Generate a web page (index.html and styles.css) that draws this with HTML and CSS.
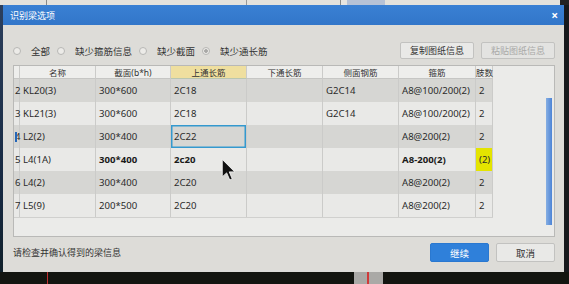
FILE: index.html
```html
<!DOCTYPE html>
<html lang="zh">
<head>
<meta charset="utf-8">
<title>识别梁选项</title>
<link rel="stylesheet" href="styles.css">
</head>
<body>
<div class="screen">
  <div class="top"></div>
  <div class="left"></div>
  <div class="dialog">
    <div class="titlebar"><span class="title">识别梁选项</span><span class="close">×</span></div>
    <div class="body">
      <div class="toolbar">
        <label class="radio"><span class="dot"></span>全部</label>
        <label class="radio"><span class="dot"></span>缺少箍筋信息</label>
        <label class="radio"><span class="dot"></span>缺少截面</label>
        <label class="radio"><span class="dot on"></span>缺少通长筋</label>
        <div class="tbtns">
          <button class="btn">复制图纸信息</button>
          <button class="btn disabled">粘贴图纸信息</button>
        </div>
      </div>
      <div class="frame">
        <div class="grid">
          <div class="tr head">
            <div class="rn"></div>
            <div>名称</div>
            <div>截面(b*h)</div>
            <div class="hl">上通长筋</div>
            <div>下通长筋</div>
            <div>侧面钢筋</div>
            <div>箍筋</div>
            <div class="last">肢数</div>
          </div>
          <div class="tr alt">
            <div class="rn">2</div><div>KL20(3)</div><div>300*600</div><div>2C18</div><div></div><div>G2C14</div><div>A8@100/200(2)</div><div>2</div>
          </div>
          <div class="tr">
            <div class="rn">3</div><div>KL21(3)</div><div>300*600</div><div>2C18</div><div></div><div>G2C14</div><div>A8@100/200(2)</div><div>2</div>
          </div>
          <div class="tr alt">
            <div class="rn"><span class="mark"></span>4</div><div>L2(2)</div><div>300*400</div><div class="sel">2C22</div><div></div><div></div><div>A8@200(2)</div><div>2</div>
          </div>
          <div class="tr">
            <div class="rn">5</div><div>L4(1A)</div><div class="b">300*400</div><div class="b">2c20</div><div></div><div></div><div class="b">A8-200(2)</div><div class="yel">(2)</div>
          </div>
          <div class="tr alt">
            <div class="rn">6</div><div>L4(2)</div><div>300*400</div><div>2C20</div><div></div><div></div><div>A8@200(2)</div><div>2</div>
          </div>
          <div class="tr end">
            <div class="rn">7</div><div>L5(9)</div><div>200*500</div><div>2C20</div><div></div><div></div><div>A8@200(2)</div><div>2</div>
          </div>
        </div>
        <div class="vscroll"></div>
      </div>
      <div class="footer">
        <span class="status">请检查并确认得到的梁信息</span>
        <button class="btn big primary">继续</button>
        <button class="btn big">取消</button>
      </div>
    </div>
  </div>
  <div class="right"></div>
  <div class="bottom"></div>
  <svg class="cursor" viewBox="0 0 12 19" width="15" height="24" aria-hidden="true">
    <path d="M1 1 L1 15 L4.5 11.8 L7 17.5 L9 16.6 L6.6 11 L11 11 Z" fill="#111" stroke="#f4f4f4" stroke-width="0.7" stroke-linejoin="round"/>
  </svg>
</div>
</body>
</html>
```
FILE: styles.css
```css
body {
  margin: 0;
  background: #111;
}
.screen {
  width: 569px;
  height: 284px;
  display: grid;
  grid-template-columns: 3px 561px 5px;
  grid-template-rows: 5px 267px 12px;
  position: relative;
  overflow: hidden;
  font-family: "Noto Sans", "Noto Sans CJK SC", sans-serif;
}
.top {
  grid-column: 1 / -1;
  background: linear-gradient(to right, #e4e2dc 0 46px, #8a8a88 46px 47px, #e4e2dc 47px 246px, #9a9a98 246px 247px, #e4e2dc 247px 340px, #8a8a88 340px 341px, #e8e6e0 341px 347px, #b6c2d6 347px 385px, #e4e2dc 385px 560px, #222 560px);
}
.left {
  background: linear-gradient(#2c3f5c, #162840 70%, #10202a);
}
.right {
  background: #17191c;
}
.bottom {
  grid-column: 1 / -1;
  background: linear-gradient(to right, #131510 0 47px, #c03030 47px 48px, #131510 48px 354px, #aaa9a6 354px 367px, #d03a3a 367px 369px, #aaa9a6 369px 383px, #131510 383px);
}
.dialog {
  background: #dddcd8;
  display: flex;
  flex-direction: column;
}
.titlebar {
  height: 20px;
  flex: none;
  background: linear-gradient(#3a80d3, #3276c9);
  display: flex;
  align-items: center;
  padding: 0 6px 0 7px;
  color: #fff;
}
.title {
  font-size: 9px;
}
.close {
  margin-left: auto;
  font-size: 12px;
  font-weight: bold;
}
.body {
  flex: 1;
  display: flex;
  flex-direction: column;
  padding: 17px 9px 10px 10px;
}
.toolbar {
  height: 17px;
  display: flex;
  align-items: center;
}
.radio {
  display: flex;
  align-items: center;
  font-size: 9.5px;
  color: #333;
  margin-right: 7px;
}
.dot {
  width: 8px;
  height: 8px;
  box-sizing: border-box;
  border: 1px solid #b7b7b5;
  border-radius: 50%;
  background: #ecebe8;
  margin-right: 10px;
}
.dot.on {
  background: radial-gradient(circle, #a8a8a6 0 1.5px, #ecebe8 2.2px);
}
.tbtns {
  margin-left: auto;
  display: flex;
  gap: 7px;
}
.btn {
  font-family: inherit;
  width: 74px;
  height: 17px;
  font-size: 9px;
  border: 1px solid #c2c2c0;
  background: #e9e9e7;
  border-radius: 2px;
  color: #333;
  padding: 0;
}
.btn.disabled {
  color: #a9a9a7;
  background: #e3e3e1;
}
.frame {
  margin-top: 6px;
  height: 172px;
  box-sizing: border-box;
  border: 1px solid #b9b9b7;
  background: #ebebe9;
  display: flex;
}
.grid {
  width: 479px;
  align-self: flex-start;
}
.tr {
  display: grid;
  grid-template-columns: 6px 76px 75px 76px 76px 76px 77px 17px;
  height: 23px;
  background: #e9e9e7;
}
.tr.alt {
  background: #d6d6d3;
}
.tr > div {
  border-right: 1px solid #cbcbc9;
  box-sizing: border-box;
  font-size: 9.6px;
  color: #2b2b2b;
  padding-left: 3px;
  display: flex;
  align-items: center;
  white-space: nowrap;
}
.tr > .rn {
  padding-left: 1px;
  overflow: visible;
  position: relative;
}
.mark {
  position: absolute;
  left: 1px;
  top: 7px;
  width: 2px;
  height: 10px;
  background: #2466b8;
}
.tr.head {
  height: 13px;
}
.tr.head > div {
  background: #eeeeec;
  font-size: 8.5px;
  justify-content: center;
  padding: 0;
  border-bottom: 1px solid #c6c6c4;
  color: #333;
}
.tr.head > .hl {
  background: #efdf9f;
  border-bottom-color: #b9c6b0;
}
.tr.head > .last {
  justify-content: flex-start;
}
.tr.end {
  border-bottom: 1px solid #d0d0ce;
}
.tr > .b {
  font-weight: bold;
  color: #1a1a1a;
}
.tr > .yel {
  background: #e4e400;
}
.tr > .sel {
  box-shadow: inset 0 0 0 1.5px #3499cf;
}
.vscroll {
  margin: 32px 2px 11px auto;
  width: 6px;
  background: linear-gradient(to right, #86aee2, #4d84d6);
}
.footer {
  margin-top: 6px;
  height: 19px;
  display: flex;
  align-items: center;
  gap: 7px;
}
.status {
  font-size: 9px;
  color: #333;
  margin-right: auto;
}
.btn.big {
  width: 59px;
  height: 19px;
  font-size: 9.5px;
}
.btn.primary {
  background: #2f80da;
  border-color: #2a78d0;
  color: #fff;
}
.cursor {
  position: absolute;
  left: 221px;
  top: 158px;
}
```
